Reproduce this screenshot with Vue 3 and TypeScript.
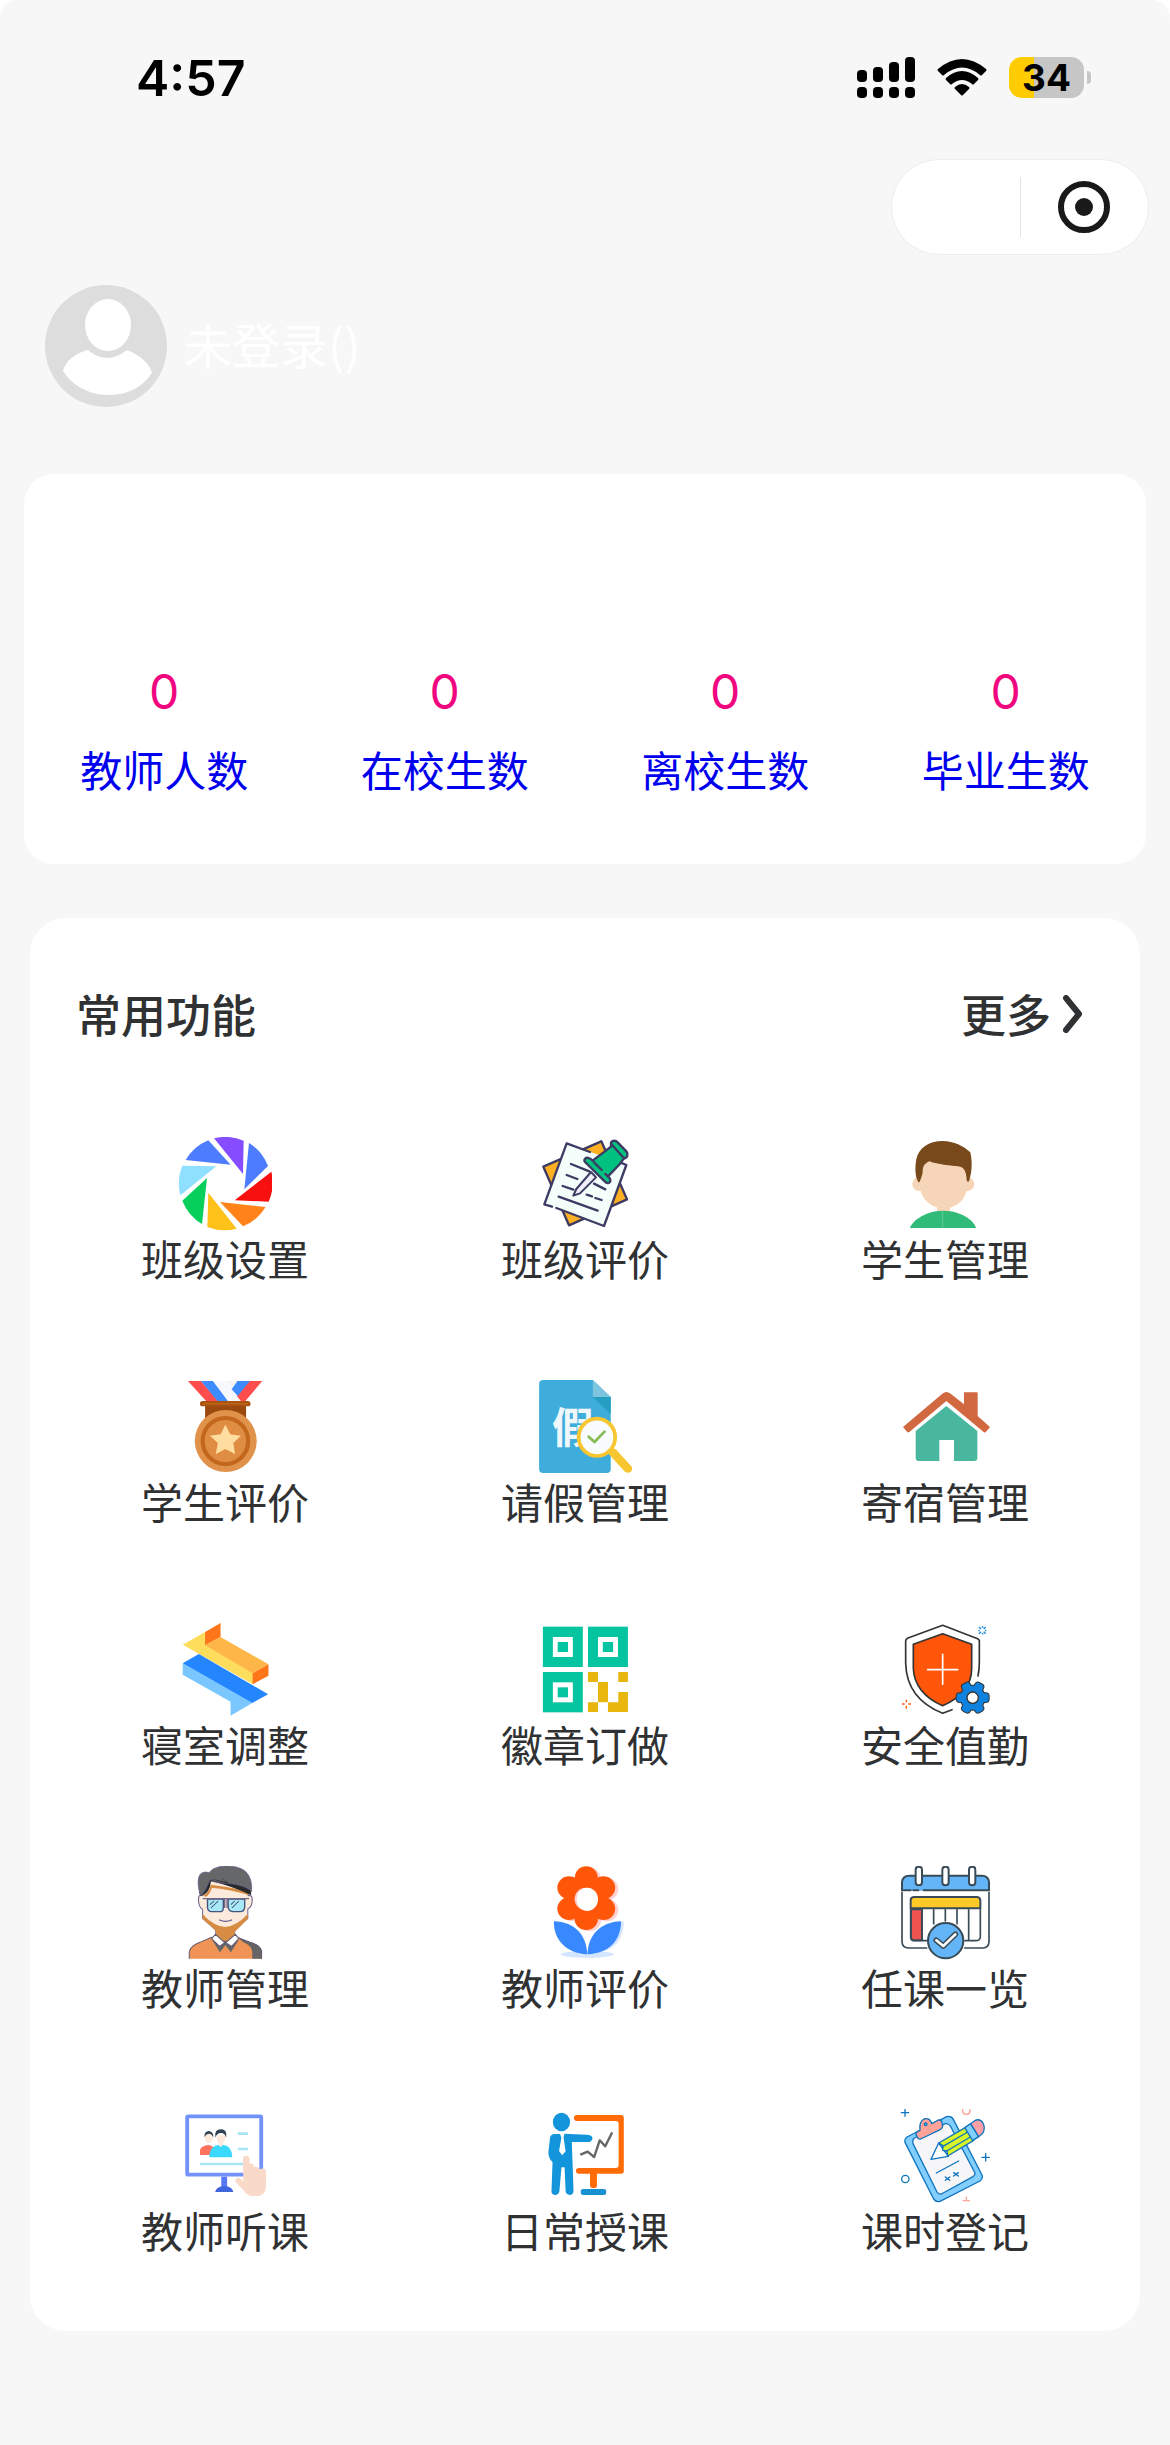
<script setup lang="ts">
interface Stat {
  label: string
  value: number
}

interface Feature {
  label: string
  viewBox: string
  art: string
}

const stats: Stat[] = [
  { label: '教师人数', value: 0 },
  { label: '在校生数', value: 0 },
  { label: '离校生数', value: 0 },
  { label: '毕业生数', value: 0 },
]

const aperture = `
  <path fill="#854dff" d="M282 85A140 140 0 0 1 371 92L369 192Z"/>
  <path fill="#4d7cff" d="M387 99A140 140 0 0 1 444 168L373 238Z"/>
  <path fill="#f81010" d="M454 185A140 140 0 0 1 446 275L344 271Z"/>
  <path fill="#ff8319" d="M437 291A140 140 0 0 1 369 349L300 276Z"/>
  <path fill="#fdc11a" d="M350 356A140 140 0 0 1 262 351L265 248Z"/>
  <path fill="#06cf5b" d="M246 342A140 140 0 0 1 187 272L261 204Z"/>
  <path fill="#8fe0ff" d="M181 256A140 140 0 0 1 187 167L289 169Z"/>
  <path fill="#4d7cff" d="M197 150A140 140 0 0 1 265 91L332 164Z"/>`

const pinnedPaper = `
  <g stroke="#3d3a63" stroke-width="7" stroke-linejoin="round" stroke-linecap="round">
    <path fill="#fdb022" d="M160 170L334 94L411 268L237 346Z"/>
    <path fill="#f4fffc" stroke="none" d="M230 100L409 165L342 348L163 283Z"/>
    <path fill="none" d="M186 290L163 283L230 100L300 126M392 158L409 165L342 348L199 294"/>
    <path fill="none" d="M243 162L298 184M230 195L262 207M218 228L250 239M206 260L323 302M312 221L346 238M290 254L306 259M316 264L335 270"/>
    <path fill="#f0effa" stroke-width="6" d="M303 186L318 202L270 250L250 257L259 237Z"/>
    <path fill="#00c17f" d="M363 101C362 92 376 89 383 97L409 124C416 133 412 144 402 145L387 165L354 199C361 204 364 213 358 218C353 222 348 218 344 214L285 156C280 149 287 141 296 144C302 146 308 152 308 152L363 110Z"/>
    <path fill="none" d="M363 101L402 145M312 157L335 180M346 192L354 199"/>
  </g>`

const student = `
  <circle fill="#f7d5b8" cx="208" cy="222" r="21"/><circle fill="#f7d5b8" cx="352" cy="222" r="21"/>
  <path fill="#f7d5b8" d="M261 275H300V315H261Z"/>
  <path fill="#f7d5b8" d="M211 150H353V225C350 268 320 295 281 295C242 295 213 265 211 235Z"/>
  <path fill="#784a1b" d="M205 216C193 198 196 165 199 148C206 114 236 93 278 93C312 94 340 107 361 127C367 155 367 185 357 214C354 217 351 215 350 210C349 194 347 180 335 172C325 167 290 167 270 162C255 160 245 157 238 154C226 159 219 167 218 180C219 195 211 208 210 214C209 217 206 217 205 216Z"/>
  <path fill="#31bb79" d="M180 354C181 342 217 302 279 302C340 302 375 337 378 354Z"/>
  <path stroke="#78d0a7" stroke-width="2" d="M278 303V354"/>`

const medal = `<g transform="scale(1.033 1)">
  <path fill="#ff4d4d" d="M110 63H148L198 123H163Z"/><path fill="#3d8bff" d="M148 63H183L228 123H196Z"/>
  <path fill="#ff4d4d" d="M288 63H326L277 123H240Z"/><path fill="#3d8bff" d="M252 63H290L255 108L236 88Z"/>
  <path fill="#f5f5f5" d="M220 63H254L238 86Z"/><path fill="#f7f9ff" d="M183 63H218L264 123H226Z"/>
  <rect fill="#9a490f" x="160" y="136" width="119" height="38"/>
  <rect fill="#a9530f" x="145" y="123" width="147" height="16" rx="8"/><path stroke="#c66b1d" stroke-width="3" d="M154 131H284"/>
  <ellipse fill="#e0924a" cx="220" cy="243" rx="90" ry="93"/>
  <ellipse fill="#df8d43" stroke="#c2671b" stroke-width="12" cx="219" cy="243" rx="66" ry="69"/>
  <path fill="#ffdda0" d="M219 194L233 223L264 227L242 249L247 282L219 267L191 282L197 249L174 227L205 223Z"/></g>`

const leave = `<g transform="scale(1.033 1)">
  <path fill="#3eaddb" d="M1142 60H1286L1338 111V327Q1338 339 1326 339H1142Q1130 339 1130 327V72Q1130 60 1142 60Z"/>
  <path fill="#249fc2" d="M1286 111H1338V163Z"/><path fill="#7dc4de" d="M1286 60L1338 111H1286Z"/></g>
  <text x="1206" y="250" font-size="126" font-weight="700" fill="#f0f7fb" font-family="Noto Sans CJK SC">假</text>
  <g transform="scale(1.033 1)"><path stroke="#f8c631" stroke-width="25" stroke-linecap="round" d="M1344 277L1388 326"/>
  <ellipse fill="#f8fcff" stroke="#f8c631" stroke-width="11" cx="1298" cy="232" rx="53" ry="56"/>
  <path fill="none" stroke="#88bc57" stroke-width="8" stroke-linecap="round" stroke-linejoin="round" d="M1274 230L1291 246L1320 215"/></g>`

const house = `
  <path fill="#d26840" d="M159 201L277 101Q289 91 302 101L342 133V97H381Q383 97 383 99V168L419 200Q420 202 418 204L407 216Q404 219 401 216L289 123L178 216Q174 219 171 215Z"/>
  <path fill="#48b79e" d="M197 213L289 138L382 213V294Q382 303 373 303H312V240H268V303H206Q197 303 197 294Z"/>`

const swap = `<g transform="scale(1.033 1)">
  <path fill="#ffdd5c" d="M95 134L160 96V135L299 219V253L95 134Z"/><path fill="#ff751a" d="M160 96L205 69V111L160 136Z"/>
  <path fill="#ffb648" d="M160 136L205 111L344 193L298 220Z"/><path fill="#ff751a" d="M298 220L344 193V227L298 253Z"/>
  <path fill="#7ac7ff" d="M95 190L297 309L234 347V305L95 224Z"/><path fill="#2486ff" d="M95 190L142 162L343 283L297 309Z"/></g>`

const finder = (x: number, y: number): string => `
  <rect fill="#05c4a0" x="${x}" y="${y}" width="116" height="121"/>
  <rect fill="#fff" x="${x + 29}" y="${y + 31}" width="58" height="60"/>
  <rect fill="#05c4a0" x="${x + 43}" y="${y + 46}" width="30" height="30"/>`

const badge = `<g transform="scale(1.033 1)">${finder(1141, 80)}${finder(1272, 80)}${finder(1141, 216)}
  <path fill="#e8b60d" d="M1272 216H1301V246H1330V307H1360V276H1388V336H1330V307H1301V336H1272V307H1301V246H1272ZM1360 216H1388V246H1360Z"/></g>`

const gearBody = `<circle r="36"/>
  <rect x="-13" y="-48" width="26" height="96" rx="9" transform="rotate(90)"/>
  <rect x="-13" y="-48" width="26" height="96" rx="9" transform="rotate(30)"/>
  <rect x="-13" y="-48" width="26" height="96" rx="9" transform="rotate(-30)"/>`

const shield = `
  <path fill="none" stroke="#333" stroke-width="5" stroke-linecap="round" stroke-linejoin="round" d="M384 228Q388 210 388 185V121L383 116L278 76L172 115Q167 119 167 123V190C169 267 210 313 278 340L306 329"/>
  <path fill="#ff560a" stroke="#333" stroke-width="5" stroke-linejoin="round" d="M278 101L365 133V205C365 260 331 295 278 317C225 295 191 255 190 205V133Z"/>
  <path stroke="#fff" stroke-width="5" stroke-linecap="round" d="M278 163V253M233 209H323"/>
  <g transform="translate(368 293)"><g fill="#333" stroke="#333" stroke-width="6">${gearBody}</g><g fill="#0f82e0">${gearBody}</g>
  <circle r="17" fill="#fff" stroke="#333" stroke-width="4"/></g>
  <path fill="none" stroke="#1e88d8" stroke-width="4" d="M387 81L393 87M407 81L401 87M387 101L393 95M407 101L401 95M395 81H400M395 101H400M387 89V94M407 89V94"/>
  <path stroke="#ff560a" stroke-width="4" d="M169 299V307M169 317V326M156 312H164M175 312H183"/>`

const teacher = `<g transform="scale(1.033 1)" stroke-linejoin="round">
  <path fill="#fcebdc" stroke="#6a5e8d" stroke-width="3" d="M152 152Q139 146 141 167Q142 187 153 193V220L191 255V274H246V255L284 220V192Q297 185 297 164Q297 149 285 152V112L180 98L152 130Z"/>
  <path fill="#d78c43" d="M153 207Q187 245 218 246Q250 244 284 206V222L246 261V275L219 294L191 274V257L153 222Z"/>
  <path fill="#fcebdc" d="M155 190H282V207Q268 226 246 236Q219 242 191 236Q166 225 155 207Z"/>
  <path fill="#d78c43" d="M153 152Q171 145 177 119Q239 127 286 140V150Q240 135 180 128Q173 148 164 155Z"/>
  <path fill="#272829" d="M143 144L147 153Q174 148 177 109Q235 122 294 151L290 110Q230 90 150 105Z"/>
  <path fill="#666768" stroke="#625a91" stroke-width="2" d="M147 152C138 127 136 95 149 85Q160 78 172 83C189 56 255 57 279 81Q298 101 295 140C281 123 244 116 219 115C201 114 188 111 177 103C167 114 166 136 147 152Z"/>
  <path fill="#272829" d="M180 102Q211 113 229 115L210 102Q221 105 219 111Z"/>
  <g fill="#a9e8f7" stroke="#46547d" stroke-width="4"><path d="M167 162H213V188Q213 200 203 200H178Q167 199 167 186Z"/><path d="M227 162H275V187Q273 200 262 200H240Q228 198 227 186Z"/></g>
  <path stroke="#706785" stroke-width="4" d="M153 161H288M217 161V189M224 161V189"/>
  <path stroke="#46547d" stroke-width="3" d="M174 179L186 168M177 189L198 168M235 179L246 168M238 189L258 168"/>
  <path fill="none" stroke="#625c91" stroke-width="4" stroke-linecap="round" d="M202 225Q219 233 237 225"/>
  <path fill="#ef9455" d="M114 341V321Q116 303 145 292L181 276L220 302L255 276L290 292Q319 301 324 319V341Z"/>
  <path fill="#646564" d="M255 276L290 291Q322 299 325 320V341H297V324Q297 302 270 291ZM179 282L203 322L219 301L235 322L257 286L220 288Z"/>
  <path fill="#fff" stroke="#625a75" stroke-width="3" d="M190 268L217 293L202 304L179 281ZM248 268L220 293L237 304L258 281Z"/>
  <path fill="none" stroke="#645a73" stroke-width="3" d="M114 341V321Q116 304 145 292L181 276M258 280L290 292Q321 301 324 319V341"/></g>`

const petals = `<circle cx="1267" cy="97" r="33"/><circle cx="1317" cy="128" r="34"/><circle cx="1317" cy="191" r="34"/>
  <circle cx="1267" cy="221" r="34"/><circle cx="1217" cy="191" r="34"/><circle cx="1217" cy="128" r="34"/><circle cx="1267" cy="159" r="48"/>`

const flower = `<g transform="scale(1.033 1)">
  <ellipse fill="#d3e5ff" cx="1270" cy="328" rx="77" ry="10"/>
  <path fill="#d3e5ff" d="M1280 326Q1281 247 1376 229Q1374 311 1302 324Z"/>
  <g fill="#ffd0d0" transform="translate(9 4)">${petals}</g><g fill="#ff560a">${petals}</g>
  <ellipse fill="#ffc9c9" cx="1266" cy="162" rx="33" ry="34"/><ellipse fill="#fff" cx="1270" cy="163" rx="31" ry="35"/>
  <path fill="#3888ff" d="M1173 229C1236 231 1268 272 1270 328C1208 326 1171 282 1173 229ZM1368 229C1307 231 1272 272 1271 328C1334 325 1368 286 1368 229Z"/></g>`

const calendar = `
  <g stroke="#394b57" stroke-width="6" stroke-linecap="round" stroke-linejoin="round">
    <path fill="#64b5f7" stroke="none" d="M156 137V112Q157 92 178 92H395Q416 92 417 112V137Z"/>
    <path fill="none" d="M182 136H156V112Q157 92 178 92H395Q416 92 417 112V136H221M190 136H205"/>
    <path fill="none" stroke-width="5" d="M156 142V291Q157 308 175 309H230M417 142V291Q416 308 399 309H344M182 190V276Q182 287 194 287H232M391 190V276Q390 287 378 287H345M251 194V236M286 194V228M321 194V236M356 194V286"/>
    <path fill="#ef5350" d="M183 193H216V286H194Q183 286 183 275Z"/>
    <path fill="#ffca28" d="M182 190V166Q182 157 191 156H382Q390 157 391 166V190Z"/>
    <g fill="#fff"><rect x="197" y="65" width="19" height="56" rx="9"/><rect x="277" y="65" width="19" height="56" rx="9"/><rect x="357" y="65" width="19" height="56" rx="9"/></g>
    <circle fill="#64b5f7" cx="287" cy="287" r="53"/>
    <path fill="none" stroke-width="17" d="M259 286L280 303L316 268"/><path fill="none" stroke="#fff" stroke-width="8" d="M259 286L280 303L316 268"/>
  </g>`

const monitor = `<g transform="scale(1.033 1)">
  <rect fill="#fff" stroke="#7291fa" stroke-width="11" x="108" y="79" width="215" height="175" rx="3"/>
  <path fill="#5878f5" d="M207 260H224V291H207Z"/><path fill="#4165de" d="M189 306Q193 289 216 289Q239 289 242 306Z"/>
  <path stroke="#a8e5f4" stroke-width="8" d="M255 131H285M255 177H285M145 222H274"/>
  <path fill="#ff7260" d="M145 195V180Q150 166 170 165Q189 165 194 195Z"/><ellipse fill="#fcebdc" cx="171" cy="142" rx="12" ry="18"/><path fill="#2e4052" d="M158 142Q157 124 171 123Q185 125 184 143Q180 131 171 131Q163 131 158 142Z"/>
  <path fill="#3cd9ff" d="M172 202Q173 164 206 164Q238 164 239 202Z"/><path fill="#ffe9dc" d="M192 136H220Q219 153 212 158V165L205 171L199 165V158Q193 151 192 136Z"/><path fill="#2e4052" d="M190 143Q186 118 206 118Q225 118 221 143Q218 129 206 129Q194 129 190 143Z"/>
  <path fill="#f9d9c7" d="M270 207Q270 197 279 197Q288 197 289 207V221Q300 218 303 231Q315 228 318 238Q337 231 337 246V292Q335 314 315 318H291L279 310L247 274Q248 263 259 264L271 274Z"/></g>`

const lecture = `<g transform="scale(1.033 1)">
  <path fill="#ff6b06" d="M1240 75H1368Q1376 75 1376 84V244Q1376 251 1368 251H1298V287Q1298 294 1291 294H1285Q1278 294 1278 287V251H1246Q1237 251 1237 242Q1237 234 1246 234H1352Q1361 234 1361 225V101Q1361 93 1352 93H1240Q1231 92 1231 84Q1231 75 1240 75Z"/>
  <ellipse fill="#1395db" cx="1195" cy="96" rx="25" ry="28"/>
  <path fill="#1395db" d="M1174 132H1191L1196 145L1201 131L1270 134Q1286 135 1285 146Q1282 157 1269 156H1225L1230 303Q1229 315 1219 315Q1208 314 1207 304L1204 232H1195L1189 304Q1187 315 1176 315Q1165 313 1166 302L1169 217Q1157 205 1157 187L1162 142Q1166 132 1174 132Z"/>
  <path fill="#fff" d="M1191 130H1204L1201 142L1207 184L1197 196L1188 183L1195 142Z"/>
  <rect fill="#1991d1" x="1251" y="297" width="74" height="18" rx="7"/>
  <path fill="none" stroke="#666" stroke-width="7" stroke-linecap="round" stroke-linejoin="round" d="M1252 193L1271 185L1290 201L1306 151L1322 169L1341 130"/></g>`

const clipboard = `
  <g stroke="#1074bd" stroke-width="4" stroke-linejoin="round" stroke-linecap="round">
    <path fill="#82cfff" d="M171 876L290 815Q304 812 310 823L396 990Q400 1001 390 1008L270 1069Q258 1072 251 1062L165 892Q163 881 171 876Z"/>
    <path fill="#f6f6f8" d="M193 879L286 836Q296 835 301 843L375 984Q376 991 369 995L274 1047Q266 1049 261 1041L189 896Q186 885 193 879Z"/>
    <path fill="#ffa298" d="M199 862L210 856Q207 829 222 822Q239 817 245 836L265 825Q274 824 276 832L278 843Q278 849 272 853L212 882Q204 883 202 877L198 869Z"/>
    <circle fill="#82cfff" cx="227" cy="838" r="4"/>
    <path fill="#fff" d="M266 894L243 943L295 934Z"/><path fill="#d7f52a" d="M266 894L347 847L370 887L293 933L291 918L278 916L279 902Z"/>
    <path fill="none" d="M279 904L353 861M290 918L361 876"/><path fill="#82cfff" d="M344 848L362 836L386 875L368 887Z"/><path fill="#ffa0a6" d="M362 836L374 827Q390 819 399 834Q407 851 398 865L386 875Z"/>
    <path fill="none" d="M259 984L326 948M286 996L299 1006M299 996L286 1006M311 983L325 993M325 983L311 993M154 803H176M165 793V814M396 937H418M407 926V948"/>
    <circle fill="none" cx="166" cy="1002" r="11"/>
  </g>
  <path fill="none" stroke="#ffa298" stroke-width="4" d="M338 792Q336 808 349 808Q362 808 360 792M349 1055V1067M338 1067H360"/>`

const features: Feature[] = [
  { label: '班级设置', viewBox: '174 81 282 282', art: aperture },
  { label: '班级评价', viewBox: '144 81 282 282', art: pinnedPaper },
  { label: '学生管理', viewBox: '144 81 282 282', art: student },
  { label: '学生评价', viewBox: '84 60 282 282', art: medal },
  { label: '请假管理', viewBox: '1164 60 282 282', art: leave },
  { label: '寄宿管理', viewBox: '144 60 282 282', art: house },
  { label: '寝室调整', viewBox: '84 69 282 282', art: swap },
  { label: '徽章订做', viewBox: '1164 69 282 282', art: badge },
  { label: '安全值勤', viewBox: '144 69 282 282', art: shield },
  { label: '教师管理', viewBox: '84 63 282 282', art: teacher },
  { label: '教师评价', viewBox: '1164 63 282 282', art: flower },
  { label: '任课一览', viewBox: '144 63 282 282', art: calendar },
  { label: '教师听课', viewBox: '84 57 282 282', art: monitor },
  { label: '日常授课', viewBox: '1164 57 282 282', art: lecture },
  { label: '课时登记', viewBox: '144 792 282 282', art: clipboard },
]
</script>

<template>
  <div class="page">
    <header class="status">
      <time class="clock">4:57</time>
      <div class="indicators">
        <svg class="signal" viewBox="0 0 58 41" aria-hidden="true">
          <rect x="0" y="13" width="10" height="12" rx="4" /><rect x="16" y="10" width="10" height="15" rx="4" />
          <rect x="32" y="5" width="10" height="20" rx="4" /><rect x="48" y="0" width="10" height="25" rx="4" />
          <rect x="0" y="30" width="10" height="11" rx="4" /><rect x="16" y="30" width="10" height="11" rx="4" />
          <rect x="32" y="30" width="10" height="11" rx="4" /><rect x="48" y="30" width="10" height="11" rx="4" />
        </svg>
        <svg class="wifi" viewBox="0 0 50 37" aria-hidden="true">
          <path d="M1 10Q25-10 49 10Q50 11 49 12L45 16Q44 17 43 16Q25 1 7 16Q6 17 5 16L1 12Q0 11 1 10Z" />
          <path d="M9 19Q25 5 41 19Q42 20 41 21L37 25Q36 26 35 25Q25 17 15 25Q14 26 13 25L9 21Q8 20 9 19Z" />
          <path d="M18 28Q25 22 32 28Q33 29 32 30L26 36Q25 37 24 36L18 30Q17 29 18 28Z" />
        </svg>
        <div class="battery">34</div>
      </div>
    </header>

    <nav class="nav">
      <div class="capsule">
        <button class="capsule-half" type="button" aria-label="菜单"></button>
        <button class="capsule-half divided" type="button" aria-label="关闭">
          <svg class="target" viewBox="0 0 52 52"><circle cx="26" cy="26" r="23" fill="none" stroke="#191919" stroke-width="6" /><circle cx="26" cy="26" r="9" fill="#191919" /></svg>
        </button>
      </div>
    </nav>

    <section class="profile">
      <svg class="avatar" viewBox="0 0 123 123" aria-hidden="true">
        <circle cx="61" cy="61" r="61" fill="#ddd" />
        <ellipse cx="63" cy="40" rx="23" ry="26" fill="#fff" />
        <path fill="#fff" d="M43 65Q62 81 82 65C95 70 105 79 107 88C98 101 84 110 64 110C43 110 27 100 18 86C21 75 31 68 43 65Z" />
      </svg>
      <span class="name">未登录()</span>
    </section>

    <main>
      <dl class="card stats">
        <div v-for="stat in stats" :key="stat.label" class="stat">
          <dt>{{ stat.label }}</dt>
          <dd>{{ stat.value }}</dd>
        </div>
      </dl>

      <section class="card features">
        <div class="heading">
          <h2>常用功能</h2>
          <a href="#" class="more">
            更多
            <svg class="chevron" viewBox="0 0 20 38" aria-hidden="true"><path d="M3 3L16 19L3 35" /></svg>
          </a>
        </div>
        <div class="grid">
          <button v-for="item in features" :key="item.label" class="feature" type="button">
            <svg class="icon" :viewBox="item.viewBox" aria-hidden="true" v-html="item.art"></svg>
            <span>{{ item.label }}</span>
          </button>
        </div>
      </section>
    </main>
  </div>
</template>

<style>
body {
  background: #fff;
}
</style>

<style scoped>
.page {
  box-sizing: border-box;
  min-height: 100vh;
  padding-bottom: 40px;
  border-radius: 18px 18px 0 0;
  background: #f7f7f7;
  color: #303133;
  font-family: "Noto Sans CJK SC", sans-serif;
}

button {
  padding: 0;
  border: 0;
  background: none;
  color: inherit;
  font: inherit;
}

.status {
  display: flex;
  justify-content: space-between;
  align-items: center;
  box-sizing: border-box;
  height: 159px;
  padding: 0 86px 4px 136px;
  color: #000;
  font-family: Inter, sans-serif;
}

.clock {
  font-size: 50px;
  font-weight: 600;
}

.indicators {
  display: flex;
  align-items: center;
  gap: 22px;
}

.signal {
  width: 58px;
  height: 41px;
}

.wifi {
  width: 50px;
  height: 37px;
}

.battery {
  position: relative;
  width: 75px;
  border-radius: 13px;
  background: linear-gradient(to right, #ffcc02 34%, #c6c6c6 34%);
  font-size: 37px;
  font-weight: 700;
  line-height: 41px;
  text-align: center;
}

.battery::after {
  content: "";
  position: absolute;
  top: 14px;
  right: -7px;
  width: 4px;
  height: 13px;
  border-radius: 0 4px 4px 0;
  background: #c6c6c6;
}

.nav {
  display: flex;
  justify-content: flex-end;
  padding-right: 21px;
}

.capsule {
  display: flex;
  align-items: center;
  box-sizing: border-box;
  width: 258px;
  height: 96px;
  border: 1px solid #ededed;
  border-radius: 48px;
  background: #fff;
}

.capsule-half {
  display: flex;
  flex: 1;
  justify-content: center;
  align-items: center;
  height: 60px;
}

.divided {
  border-left: 1px solid #e3e3e3;
}

.target {
  width: 52px;
  height: 52px;
}

.profile {
  display: flex;
  align-items: center;
  gap: 16px;
  padding: 30px 45px 66px;
}

.avatar {
  width: 123px;
  height: 123px;
}

.name {
  padding-bottom: 8px;
  color: #fff;
  font-size: 48px;
  line-height: 60px;
}

.card {
  background: #fff;
}

.stats {
  display: flex;
  margin: 0 24px 54px;
  padding: 190px 0 68px;
  border-radius: 30px;
}

.stat {
  display: flex;
  flex: 1;
  flex-direction: column-reverse;
  gap: 22px;
  text-align: center;
}

.stat dt {
  color: #00e;
  font-size: 42px;
  line-height: 54px;
}

.stat dd {
  margin: 0;
  color: #f0077f;
  font-family: Inter, sans-serif;
  font-size: 48px;
  line-height: 56px;
}

.features {
  margin: 0 30px;
  padding: 66px 15px 74px;
  border-radius: 36px;
}

.heading {
  display: flex;
  justify-content: space-between;
  align-items: center;
  padding: 0 42px 0 31px;
  font-size: 45px;
  font-weight: 500;
  line-height: 60px;
}

h2 {
  margin: 0;
  font: inherit;
}

.more {
  display: flex;
  align-items: center;
  gap: 12px;
  color: inherit;
  text-decoration: none;
}

.chevron {
  width: 20px;
  height: 38px;
  fill: none;
  stroke: #303133;
  stroke-width: 6;
  stroke-linecap: round;
  stroke-linejoin: round;
}

.grid {
  display: grid;
  grid-template-columns: repeat(3, 1fr);
  row-gap: 95px;
  margin-top: 93px;
}

.feature {
  display: flex;
  flex-direction: column;
  align-items: center;
  font-size: 42px;
  line-height: 54px;
}

.icon {
  width: 94px;
  height: 94px;
}
</style>
